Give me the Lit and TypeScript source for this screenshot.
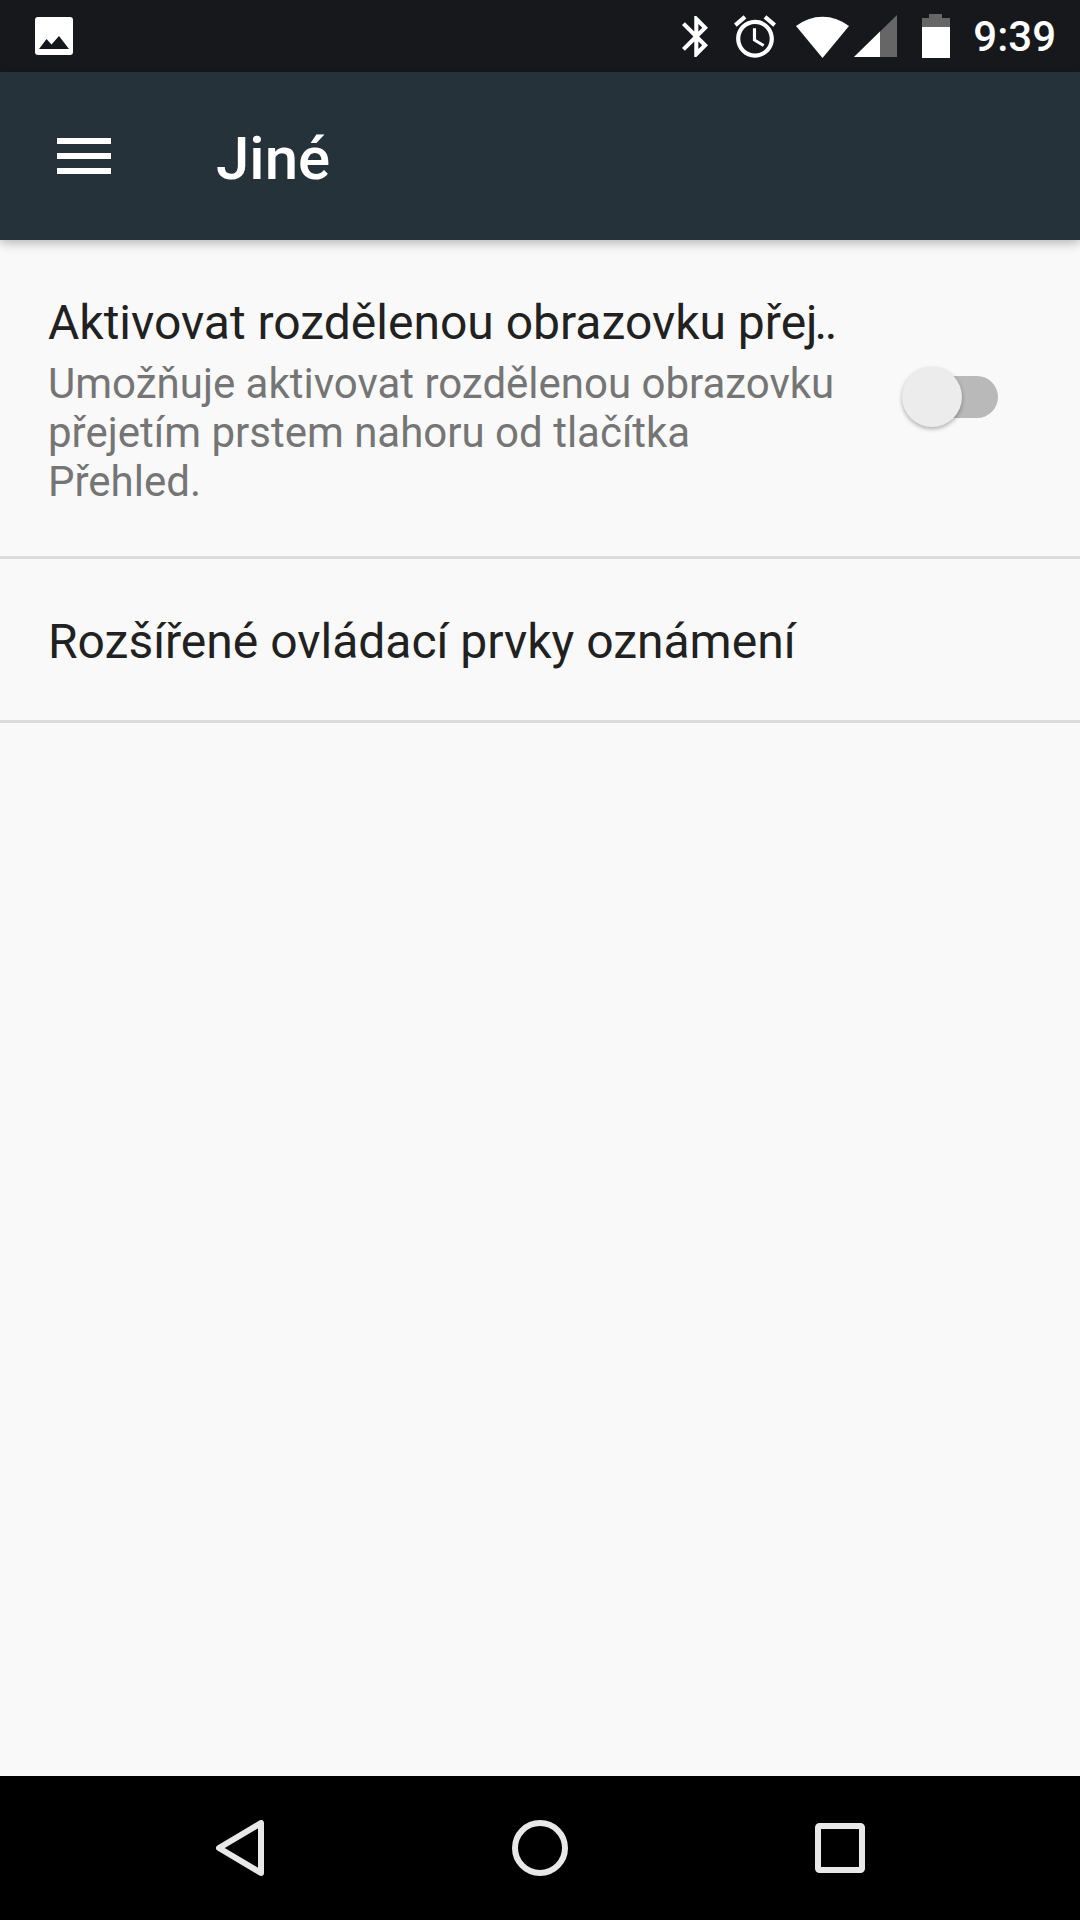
import { html, css, LitElement } from "lit";
import { customElement } from "lit/decorators.js";

@customElement("status-bar")
export class StatusBar extends LitElement {
  render() {
    return html`
      <svg class="notif" viewBox="0 0 38 38">
        <rect width="38" height="38" rx="3" fill="#fff"></rect>
        <path d="M4 32 L11.5 22 L16.5 27.5 L24 19 L34 32 Z" fill="#16181c"></path>
      </svg>
      <div class="icons">
        <svg class="bt" viewBox="5 2 12.71 20">
          <path
            fill="#fff"
            d="M17.71 7.71L12 2h-1v7.59L6.41 5 5 6.41 10.59 12 5 17.59 6.41 19 11 14.41V22h1l5.71-5.71-4.3-4.29 4.3-4.29zM13 5.83l1.88 1.88L13 9.59V5.83zm1.88 10.46L13 18.17v-3.76l1.88 1.88z"
          ></path>
        </svg>
        <svg class="alarm" viewBox="2 1.86 20 20.14">
          <path
            fill="#fff"
            d="M22 5.72l-4.6-3.86-1.29 1.53 4.6 3.86L22 5.72zM7.88 3.39L6.6 1.86 2 5.71l1.29 1.53 4.59-3.85zM12.5 8H11v6l4.75 2.85.75-1.23-4-2.37V8zM12 4c-4.97 0-9 4.03-9 9s4.03 9 9 9 9-4.03 9-9-4.03-9-9-9zm0 16c-3.87 0-7-3.13-7-7s3.13-7 7-7 7 3.13 7 7-3.13 7-7 7z"
          ></path>
        </svg>
        <svg class="wifi" viewBox="0 0 53 43">
          <path d="M0 11 A43 43 0 0 1 53 11 L26.5 43 Z" fill="#fff"></path>
        </svg>
        <svg class="signal" viewBox="0 0 43 42">
          <path d="M0 42 L43 0 V42 Z" fill="#666"></path>
          <path d="M0 42 L26 16.6 V42 Z" fill="#fff"></path>
        </svg>
        <svg class="battery" viewBox="0 0 28 44">
          <path d="M7 0 H20 V4 H28 V13 H0 V4 H7 Z" fill="#666"></path>
          <rect y="13" width="28" height="31" fill="#fff"></rect>
        </svg>
        <span class="time">9:39</span>
      </div>
    `;
  }

  static styles = css`
    :host {
      display: flex;
      align-items: center;
      height: 72px;
      padding: 0 24px 0 35px;
      box-sizing: border-box;
      background: #16181c;
      flex: none;
    }

    svg {
      display: block;
      flex: none;
    }

    .notif {
      width: 38px;
      height: 38px;
    }

    .icons {
      display: flex;
      align-items: center;
      margin-left: auto;
    }

    .bt {
      width: 26px;
      height: 43px;
      margin-right: 26px;
    }

    .alarm {
      width: 42px;
      height: 43px;
      margin-right: 20px;
    }

    .wifi {
      width: 53px;
      height: 43px;
      margin-right: 5px;
    }

    .signal {
      width: 43px;
      height: 42px;
      margin-right: 25px;
    }

    .battery {
      width: 28px;
      height: 44px;
      margin-right: 23px;
    }

    .time {
      font: 500 42px/72px Roboto, sans-serif;
      color: #fff;
      padding-top: 1px;
    }
  `;
}

@customElement("app-bar")
export class AppBar extends LitElement {
  render() {
    return html`
      <div class="menu"><i></i><i></i><i></i></div>
      <div class="title">Jiné</div>
    `;
  }

  static styles = css`
    :host {
      display: flex;
      align-items: center;
      height: 168px;
      padding-left: 57px;
      box-sizing: border-box;
      background: #26323a;
      box-shadow: 0 3px 10px rgba(0, 0, 0, 0.28);
      position: relative;
      flex: none;
    }

    .menu {
      display: flex;
      flex-direction: column;
      gap: 9px;
      width: 54px;
      margin-right: 105px;
    }

    .menu i {
      display: block;
      height: 6px;
      background: #fff;
    }

    .title {
      font: 500 60px/72px Roboto, sans-serif;
      color: #fff;
      padding-top: 5px;
    }
  `;
}

@customElement("nav-bar")
export class NavBar extends LitElement {
  render() {
    return html`
      <div class="cell">
        <svg width="48" height="56" viewBox="0 0 48 56">
          <path
            d="M45 3 V53 L3 28 Z"
            fill="none"
            stroke="#e8e8e8"
            stroke-width="6"
            stroke-linejoin="round"
          ></path>
        </svg>
      </div>
      <div class="cell">
        <svg width="56" height="56" viewBox="0 0 56 56">
          <circle cx="28" cy="28" r="25" fill="none" stroke="#e8e8e8" stroke-width="6"></circle>
        </svg>
      </div>
      <div class="cell">
        <svg width="50" height="50" viewBox="0 0 50 50">
          <rect x="3" y="3" width="44" height="44" rx="1.5" fill="none" stroke="#e8e8e8" stroke-width="6"></rect>
        </svg>
      </div>
    `;
  }

  static styles = css`
    :host {
      display: flex;
      justify-content: center;
      height: 144px;
      background: #000;
      flex: none;
    }

    .cell {
      display: flex;
      align-items: center;
      justify-content: center;
      width: 300px;
    }

    svg {
      display: block;
    }
  `;
}

@customElement("app-root")
export class AppRoot extends LitElement {
  render() {
    return html`
      <status-bar></status-bar>
      <app-bar></app-bar>
      <main>
        <div class="row switch-row">
          <div class="text">
            <div class="label">Aktivovat rozdělenou obrazovku přej<span class="dots">..</span></div>
            <div class="summary">
              Umožňuje aktivovat rozdělenou obrazovku přejetím prstem nahoru od
              tlačítka Přehled.
            </div>
          </div>
          <div class="switch"><span class="track"></span><span class="thumb"></span></div>
        </div>
        <div class="row link-row">
          <div class="label">Rozšířené ovládací prvky oznámení</div>
        </div>
      </main>
      <nav-bar></nav-bar>
    `;
  }

  static styles = css`
    :host {
      display: flex;
      flex-direction: column;
      height: 1920px;
      font-family: Roboto, sans-serif;
    }

    main {
      flex: 1;
      background: #f9f9f9;
    }

    .row {
      display: flex;
      align-items: center;
      padding-left: 48px;
      border-bottom: 3px solid #dcdcdc;
    }

    .switch-row {
      height: 316px;
    }

    .link-row {
      height: 157px;
      padding-top: 4px;
    }

    .text {
      width: 795px;
      margin-top: 5px;
    }

    .label {
      font-size: 48px;
      line-height: 56px;
      color: #212121;
      white-space: nowrap;
    }

    .dots {
      margin-left: -3px;
      letter-spacing: -2.5px;
    }

    .summary {
      margin-top: 8px;
      font-size: 42px;
      line-height: 49px;
      color: #757575;
    }

    .switch {
      position: relative;
      width: 96px;
      height: 60px;
      margin-left: 59px;
      margin-top: -2px;
    }

    .track {
      position: absolute;
      left: 6px;
      right: 0;
      top: 9px;
      height: 42px;
      border-radius: 21px;
      background: #b9b9b9;
    }

    .thumb {
      position: absolute;
      left: 0;
      top: 0;
      width: 60px;
      height: 60px;
      border-radius: 50%;
      background: #ececec;
      box-shadow: 0 2px 4px rgba(0, 0, 0, 0.3);
    }
  `;
}

declare global {
  interface HTMLElementTagNameMap {
    "app-root": AppRoot;
    "status-bar": StatusBar;
    "app-bar": AppBar;
    "nav-bar": NavBar;
  }
}
